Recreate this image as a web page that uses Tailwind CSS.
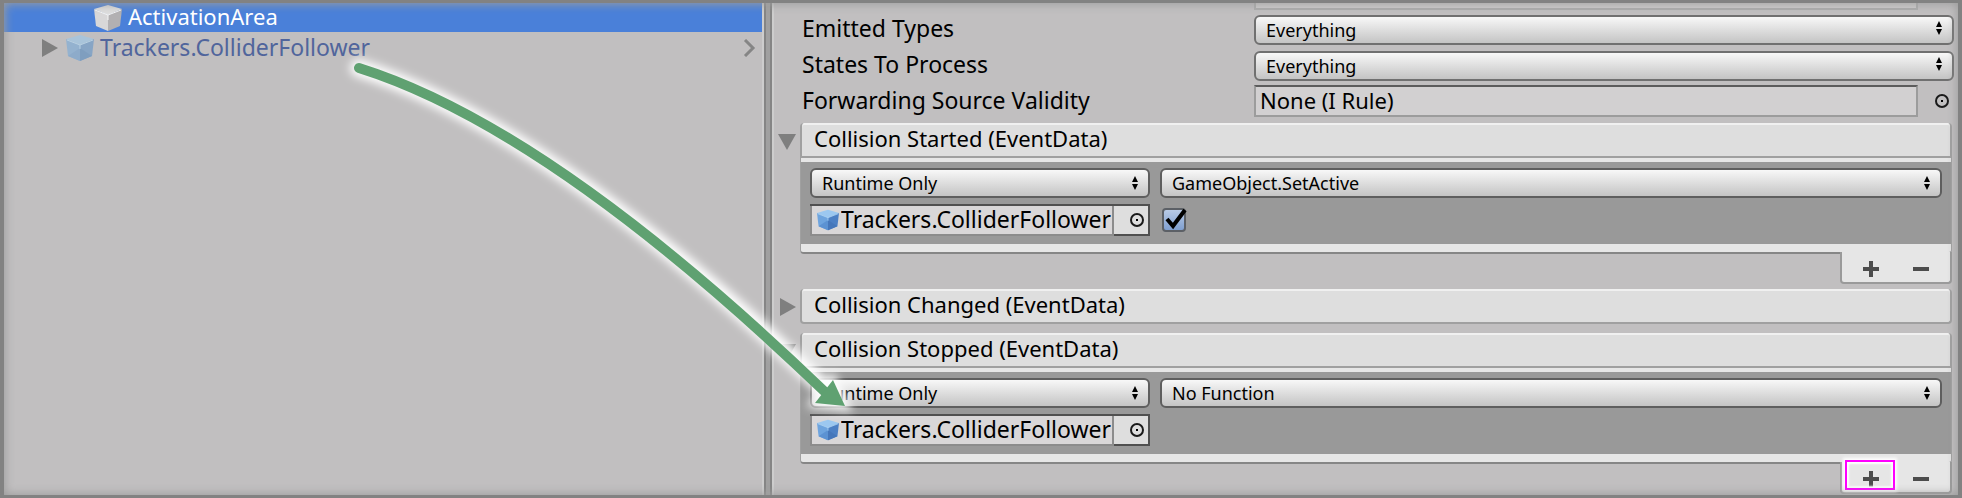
<!DOCTYPE html>
<html lang="en">
<head>
<meta charset="utf-8">
<title>Collision event setup</title>
<script src="https://cdn.jsdelivr.net/npm/@tailwindcss/browser@4"></script>
</head>
<body class="bg-[#c1bfc0] font-['Noto_Sans','Open_Sans',sans-serif] text-[22px] leading-[30px] text-black">

<svg class="hidden" aria-hidden="true">
  <symbol id="cube-blue" viewBox="0 0 28 28">
    <path d="M14 1 28 5 14 11 0 5Z" fill="#9cc8f0"/>
    <path d="M0 5 14 11V27L2 22Z" fill="#6ea4de"/>
    <path d="M28 5 14 11V27L26 22Z" fill="#4d80c4"/>
    <path d="M2 22 14 14V27Z" fill="#5c92d2"/>
    <path d="M26 22 14 14V27Z" fill="#4677ba"/>
    <path d="M1 6 14 11 27 6M14 11V15" fill="none" stroke="#a9d2f4" stroke-width="1"/>
  </symbol>
  <symbol id="cube-pale" viewBox="0 0 28 28">
    <path d="M14 1 28 5 14 11 0 5Z" fill="#a9c4da"/>
    <path d="M0 5 14 11V27L2 22Z" fill="#94b2cf"/>
    <path d="M28 5 14 11V27L26 22Z" fill="#87a5c5"/>
    <path d="M2 22 14 14V27Z" fill="#8dabca"/>
    <path d="M26 22 14 14V27Z" fill="#7f9ebf"/>
    <path d="M1 6 14 11 27 6M14 11V15" fill="none" stroke="#b8d0e2" stroke-width="1"/>
  </symbol>
  <symbol id="cube-white" viewBox="0 0 28 28">
    <path d="M14 1 28 5 14 11 0 5Z" fill="#dedede"/>
    <path d="M0 5 14 11V27L2 22Z" fill="#d8d7d8"/>
    <path d="M28 5 14 11V27L26 22Z" fill="#b2b0b2"/>
    <path d="M1 6 14 11 27 6M14 11V16" fill="none" stroke="#f4f4f4" stroke-width="1"/>
  </symbol>
  <symbol id="updown" viewBox="0 0 8 14">
    <path d="M4 0 7 6H1ZM4 14 7 8H1Z" fill="#000"/>
  </symbol>
  <symbol id="target" viewBox="0 0 16 16">
    <circle cx="8" cy="8" r="6" fill="none" stroke="#1a1a1a" stroke-width="2"/>
    <rect x="7" y="7" width="2" height="2" fill="#000"/>
  </symbol>
</svg>

<div class="relative grid min-h-screen grid-cols-[760fr_10px_1184fr] overflow-hidden border-x-4 border-y-3 border-[#828282]">

  <!-- Hierarchy -->
  <nav aria-label="Hierarchy" class="border-r-2 border-[#cdcdcd]">
    <a href="#" class="flex h-[29px] items-center gap-[6px] bg-[#4a80d9] pl-[90px] text-white">
      <svg class="size-7 shrink-0"><use href="#cube-white"/></svg>
      <span class="-mt-[3px]">ActivationArea</span>
    </a>
    <div class="flex h-8 items-center pr-[6px] pl-[38px]">
      <button type="button" aria-label="Expand Trackers.ColliderFollower" class="mr-2"><svg class="block h-[18px] w-4" viewBox="0 0 16 18"><path d="M0 0 16 9 0 18Z" fill="#7f7f7f"/></svg></button>
      <a href="#" class="flex items-center gap-[6px] text-[23px] text-[#50659c]">
        <svg class="size-7 shrink-0"><use href="#cube-pale"/></svg>
        <span class="-mt-[2px]">Trackers.ColliderFollower</span>
      </a>
      <button type="button" aria-label="Open prefab" class="ml-auto"><svg class="block h-[18px] w-[14px]" viewBox="0 0 14 18"><path d="M3 1 11 9 3 17" fill="none" stroke="#858585" stroke-width="3"/></svg></button>
    </div>
  </nav>

  <div class="border-r-2 border-[#cdcdcd]"><div class="h-full border-x-2 border-[#858585] bg-[#a0a0a0]"></div></div>

  <!-- Inspector -->
  <main class="pl-[4px]">
    <div class="flex flex-col gap-[6px] pr-[4px] pl-6">
      <div class="-mb-[3px] flex h-[7px] pr-[36px] pl-[452px]"><div class="grow border-2 border-t-0 border-[#acacac] bg-[#cfcdce]"></div></div>
      <div class="flex h-[30px]">
        <label for="emitted" class="w-[452px] shrink-0 text-[23px]">Emitted Types</label>
        <div class="relative grow">
          <select id="emitted" class="h-[30px] w-full appearance-none rounded-md border-2 border-[#707070] bg-linear-to-b from-[#f8f8f8] to-[#c4c4c4] pl-[10px] text-lg leading-[26px]"><option>Everything</option></select>
          <svg class="pointer-events-none absolute top-2 right-[11px] h-[14px] w-2"><use href="#updown"/></svg>
        </div>
      </div>
      <div class="flex h-[30px]">
        <label for="states" class="w-[452px] shrink-0 text-[23px]">States To Process</label>
        <div class="relative grow">
          <select id="states" class="h-[30px] w-full appearance-none rounded-md border-2 border-[#707070] bg-linear-to-b from-[#f8f8f8] to-[#c4c4c4] pl-[10px] text-lg leading-[26px]"><option>Everything</option></select>
          <svg class="pointer-events-none absolute top-2 right-[11px] h-[14px] w-2"><use href="#updown"/></svg>
        </div>
      </div>
      <div class="flex h-8">
        <label for="validity" class="w-[452px] shrink-0 text-[23px]">Forwarding Source Validity</label>
        <input id="validity" type="text" readonly value="None (I Rule)" class="h-8 min-w-0 grow border-2 border-[#9c9c9c] border-t-[#5c5c5c] bg-[#d2d0d1] pb-[2px] pl-1 leading-[26px]">
        <button type="button" aria-label="Pick source validity" class="mr-1 ml-4"><svg class="block size-4"><use href="#target"/></svg></button>
      </div>
    </div>

    <!-- Collision Started -->
    <section class="mt-[6px] flex pr-[6px]">
      <button type="button" aria-label="Collapse Collision Started" class="mt-[11px] w-[22px] shrink-0 self-start"><svg class="block h-4 w-[18px]" viewBox="0 0 18 16"><path d="M0 0H18L9 16Z" fill="#7f7f7f"/></svg></button>
      <div class="min-w-0 grow">
        <div class="rounded-t-sm border-x-2 border-b-2 border-[#a0a0a0] bg-[#dedede] shadow-[inset_0_2px_0_#f0f0f0]">
          <h2 class="h-[33px] pl-3">Collision Started (EventData)</h2>
        </div>
        <div class="rounded-b-sm border-x border-b-2 border-[#868686] border-x-[#a0a0a0] bg-[#e6e6e6] pt-1 pb-2">
          <div class="grid grid-cols-[340px_1fr] gap-x-[10px] gap-y-[6px] bg-[#999] px-[9px] pt-[6px] pb-2">
            <div class="relative">
              <select aria-label="Started call state" class="block h-[30px] w-full appearance-none rounded-md border-2 border-[#5e5e5e] bg-linear-to-b from-[#f8f8f8] to-[#c4c4c4] pl-[10px] text-lg leading-[26px]"><option>Runtime Only</option></select>
              <svg class="pointer-events-none absolute top-2 right-[11px] h-[14px] w-2"><use href="#updown"/></svg>
            </div>
            <div class="relative">
              <select aria-label="Started function" class="block h-[30px] w-full appearance-none rounded-md border-2 border-[#5e5e5e] bg-linear-to-b from-[#f8f8f8] to-[#c4c4c4] pl-[10px] text-lg leading-[26px]"><option>GameObject.SetActive</option></select>
              <svg class="pointer-events-none absolute top-2 right-[11px] h-[14px] w-2"><use href="#updown"/></svg>
            </div>
            <div class="flex h-8 border-t-2 border-[#505050]">
              <div class="flex w-[304px] items-center border-2 border-t-0 border-[#8c8c8c] bg-[#d9d7d8] pl-[5px]">
                <svg class="size-[22px] shrink-0"><use href="#cube-blue"/></svg>
                <input type="text" readonly aria-label="Started target" value="Trackers.ColliderFollower" class="ml-[2px] h-7 min-w-0 grow pb-[2px] text-[23px] leading-[26px]">
              </div>
              <button type="button" aria-label="Pick started target" class="flex grow items-center justify-end border-r-2 border-b-2 border-[#505050] bg-[#dedede] pr-[3px]"><svg class="size-4"><use href="#target"/></svg></button>
            </div>
            <div class="relative pt-1 pl-[2px]">
              <input type="checkbox" checked aria-label="Active" class="block size-6 appearance-none rounded-sm border-2 border-[#5c6066] bg-linear-to-b from-[#b9cbe6] to-[#7f9fd0]">
              <svg class="pointer-events-none absolute top-1 left-[2px] size-6 overflow-visible" viewBox="0 0 24 24"><path d="M5 11 11 18 23 2" fill="none" stroke="#000" stroke-width="4"/></svg>
            </div>
          </div>
        </div>
        <div class="-mt-[2px] ml-auto flex h-8 w-[112px] items-center justify-around rounded-b-sm border-2 border-t-0 border-[#9a9a9a] bg-[#e6e6e6] px-1 pt-[3px]">
          <button type="button" aria-label="Add started listener"><svg class="block size-4" viewBox="0 0 16 16"><path d="M0 8H16M8 0V16" stroke="#4c4c4c" stroke-width="4"/></svg></button>
          <button type="button" aria-label="Remove started listener"><svg class="block size-4" viewBox="0 0 16 16"><path d="M0 8H16" stroke="#4c4c4c" stroke-width="4"/></svg></button>
        </div>
      </div>
    </section>

    <!-- Collision Changed -->
    <section class="mt-[5px] flex pr-[6px]">
      <button type="button" aria-label="Expand Collision Changed" class="mt-[9px] w-[22px] shrink-0 self-start pl-[2px]"><svg class="block h-[18px] w-4" viewBox="0 0 16 18"><path d="M0 0 16 9 0 18Z" fill="#7f7f7f"/></svg></button>
      <div class="grow rounded-sm border-x-2 border-b-2 border-[#a0a0a0] bg-[#dedede] shadow-[inset_0_2px_0_#f0f0f0]">
        <h2 class="h-[33px] pl-3">Collision Changed (EventData)</h2>
      </div>
    </section>

    <!-- Collision Stopped -->
    <section class="mt-[9px] flex pr-[6px]">
      <button type="button" aria-label="Collapse Collision Stopped" class="mt-[11px] w-[22px] shrink-0 self-start"><svg class="block h-4 w-[18px]" viewBox="0 0 18 16"><path d="M0 0H18L9 16Z" fill="#7f7f7f"/></svg></button>
      <div class="min-w-0 grow">
        <div class="rounded-t-sm border-x-2 border-b-2 border-[#a0a0a0] bg-[#dedede] shadow-[inset_0_2px_0_#f0f0f0]">
          <h2 class="h-[33px] pl-3">Collision Stopped (EventData)</h2>
        </div>
        <div class="rounded-b-sm border-x border-b-2 border-[#868686] border-x-[#a0a0a0] bg-[#e6e6e6] pt-1 pb-2">
          <div class="grid grid-cols-[340px_1fr] gap-x-[10px] gap-y-[6px] bg-[#999] px-[9px] pt-[6px] pb-2">
            <div class="relative">
              <select aria-label="Stopped call state" class="block h-[30px] w-full appearance-none rounded-md border-2 border-[#5e5e5e] bg-linear-to-b from-[#f8f8f8] to-[#c4c4c4] pl-[10px] text-lg leading-[26px]"><option>Runtime Only</option></select>
              <svg class="pointer-events-none absolute top-2 right-[11px] h-[14px] w-2"><use href="#updown"/></svg>
            </div>
            <div class="relative">
              <select aria-label="Stopped function" class="block h-[30px] w-full appearance-none rounded-md border-2 border-[#5e5e5e] bg-linear-to-b from-[#f8f8f8] to-[#c4c4c4] pl-[10px] text-lg leading-[26px]"><option>No Function</option></select>
              <svg class="pointer-events-none absolute top-2 right-[11px] h-[14px] w-2"><use href="#updown"/></svg>
            </div>
            <div class="flex h-8 border-t-2 border-[#505050]">
              <div class="flex w-[304px] items-center border-2 border-t-0 border-[#8c8c8c] bg-[#d9d7d8] pl-[5px]">
                <svg class="size-[22px] shrink-0"><use href="#cube-blue"/></svg>
                <input type="text" readonly aria-label="Stopped target" value="Trackers.ColliderFollower" class="ml-[2px] h-7 min-w-0 grow pb-[2px] text-[23px] leading-[26px]">
              </div>
              <button type="button" aria-label="Pick stopped target" class="flex grow items-center justify-end border-r-2 border-b-2 border-[#505050] bg-[#dedede] pr-[3px]"><svg class="size-4"><use href="#target"/></svg></button>
            </div>
          </div>
        </div>
        <div class="relative -mt-[2px] ml-auto flex h-8 w-[112px] items-center justify-around rounded-b-sm border-2 border-t-0 border-[#9a9a9a] bg-[#e6e6e6] px-1 pt-[3px]">
          <button type="button" aria-label="Add stopped listener"><svg class="block size-4" viewBox="0 0 16 16"><path d="M0 8H16M8 0V16" stroke="#4c4c4c" stroke-width="4"/></svg></button>
          <button type="button" aria-label="Remove stopped listener"><svg class="block size-4" viewBox="0 0 16 16"><path d="M0 8H16" stroke="#4c4c4c" stroke-width="4"/></svg></button>
          <div class="pointer-events-none absolute -top-[2px] left-[3px] h-[30px] w-[50px] border-2 border-[#ff00ff] shadow-[0_0_3px_2px_#fff,inset_0_0_2px_2px_#fff]"></div>
        </div>
      </div>
    </section>
  </main>

  <!-- Soft inner edge and drag arrow -->
  <div class="pointer-events-none absolute inset-0 shadow-[inset_0_0_10px_1px_#9c9c9c]"></div>
  <svg class="pointer-events-none absolute -top-[3px] -left-1 w-[calc(100%+8px)]" viewBox="0 0 1962 498" aria-hidden="true">
    <defs><filter id="soft" x="-10%" y="-10%" width="120%" height="120%"><feGaussianBlur stdDeviation="5"/></filter></defs>
    <g filter="url(#soft)" fill="#fff" stroke="#fff">
      <path d="M359 68Q550 128 824 388" fill="none" stroke-width="18" stroke-linecap="round"/>
      <path d="M832 380 845 406 815 403Z" stroke-width="9"/>
    </g>
    <path d="M359 68Q550 128 824 391" fill="none" stroke="#5fa171" stroke-width="10" stroke-linecap="round"/>
    <path d="M833 380 845 406 815 403Z" fill="#5fa171"/>
  </svg>
</div>
</body>
</html>
